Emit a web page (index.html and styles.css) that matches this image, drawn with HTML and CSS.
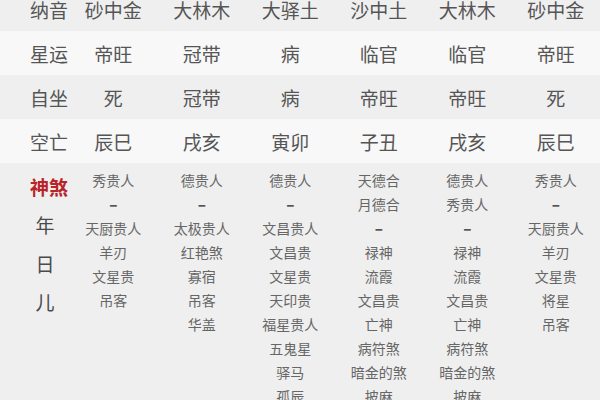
FILE: index.html
```html
<!DOCTYPE html>
<html lang="zh">
<head>
<meta charset="utf-8">
<link rel="stylesheet" href="styles.css">
</head>
<body>
<div class="table">
  <div class="row gray">
    <div class="label">纳音</div>
    <div class="cell">砂中金</div><div class="cell">大林木</div><div class="cell">大驿土</div><div class="cell">沙中土</div><div class="cell">大林木</div><div class="cell">砂中金</div>
  </div>
  <div class="row light">
    <div class="label">星运</div>
    <div class="cell">帝旺</div><div class="cell">冠带</div><div class="cell">病</div><div class="cell">临官</div><div class="cell">临官</div><div class="cell">帝旺</div>
  </div>
  <div class="row gray">
    <div class="label">自坐</div>
    <div class="cell">死</div><div class="cell">冠带</div><div class="cell">病</div><div class="cell">帝旺</div><div class="cell">帝旺</div><div class="cell">死</div>
  </div>
  <div class="row light">
    <div class="label">空亡</div>
    <div class="cell">辰巳</div><div class="cell">戌亥</div><div class="cell">寅卯</div><div class="cell">子丑</div><div class="cell">戌亥</div><div class="cell">辰巳</div>
  </div>
  <div class="shensha gray">
    <div class="ss-label">
      <div class="ss-title">神煞</div>
      <div class="ss-sub">年</div>
      <div class="ss-sub">日</div>
      <div class="ss-sub">儿</div>
    </div>
    <div class="ss-col">
      <div>秀贵人</div><div class="dash">–</div><div>天厨贵人</div><div>羊刃</div><div>文星贵</div><div>吊客</div>
    </div>
    <div class="ss-col">
      <div>德贵人</div><div class="dash">–</div><div>太极贵人</div><div>红艳煞</div><div>寡宿</div><div>吊客</div><div>华盖</div>
    </div>
    <div class="ss-col">
      <div>德贵人</div><div class="dash">–</div><div>文昌贵人</div><div>文昌贵</div><div>文星贵</div><div>天印贵</div><div>福星贵人</div><div>五鬼星</div><div>驿马</div><div>孤辰</div>
    </div>
    <div class="ss-col">
      <div>天德合</div><div>月德合</div><div class="dash">–</div><div>禄神</div><div>流霞</div><div>文昌贵</div><div>亡神</div><div>病符煞</div><div>暗金的煞</div><div>披麻</div>
    </div>
    <div class="ss-col">
      <div>德贵人</div><div>秀贵人</div><div class="dash">–</div><div>禄神</div><div>流霞</div><div>文昌贵</div><div>亡神</div><div>病符煞</div><div>暗金的煞</div><div>披麻</div>
    </div>
    <div class="ss-col">
      <div>秀贵人</div><div class="dash">–</div><div>天厨贵人</div><div>羊刃</div><div>文星贵</div><div>将星</div><div>吊客</div>
    </div>
  </div>
</div>
</body>
</html>
```
FILE: styles.css
```css
html, body {
  margin: 0;
  padding: 0;
  background: #f0f0f0;
  overflow: hidden;
}
body {
  width: 600px;
  height: 400px;
  font-family: "Noto Sans CJK SC", "Noto Sans", sans-serif;
  color: #555;
}
.table {
  margin-top: -13px;
}
.row, .shensha {
  display: grid;
  grid-template-columns: 69px repeat(6, 88.5px);
}
.row {
  height: 44px;
  align-items: center;
  font-size: 19px;
}
.gray {
  background: #efefef;
}
.light {
  background: #f8f8f8;
}
.label {
  padding-left: 29px;
  text-align: center;
  color: #555;
}
.cell {
  text-align: center;
}
.shensha {
  padding-top: 5px;
  height: 260px;
}
.ss-label {
  padding-left: 29px;
  text-align: center;
  margin-top: -1px;
}
.ss-title {
  font-size: 19px;
  line-height: 39px;
  font-weight: bold;
  color: #b92428;
}
.ss-sub {
  font-size: 19px;
  line-height: 38.5px;
  color: #4a4a4a;
  padding-right: 8px;
}
.ss-col {
  text-align: center;
  font-size: 14px;
  line-height: 24px;
  color: #666;
}
.dash {
  font-weight: 900;
  color: #555;
  font-size: 15px;
}
```
